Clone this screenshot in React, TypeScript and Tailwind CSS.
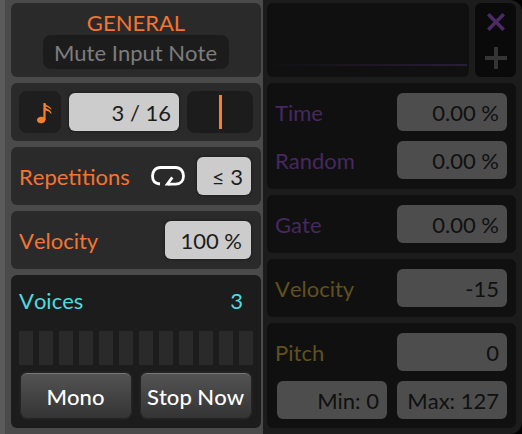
import type { ReactNode } from 'react'
import clsx from 'clsx'

function Card({ className, children }: { className?: string; children?: ReactNode }) {
  return <div className={clsx('rounded-md', className)}>{children}</div>
}

function Label({ className, children }: { className?: string; children: ReactNode }) {
  return <span className={clsx('h-[38px] pt-px leading-[38px]', className)}>{children}</span>
}

// Light numeric field of the active panel
function Field({ className, children }: { className?: string; children: ReactNode }) {
  return (
    <div
      className={clsx(
        'h-[38px] rounded-md bg-[#cccccc] pt-px text-right leading-[38px] text-[#1c1c1c] shadow-[0_0_2px_1px_#202020]',
        className,
      )}
    >
      {children}
    </div>
  )
}

// Same field in the disabled panel
function DimField({ children }: { children: ReactNode }) {
  return (
    <div className="h-[38px] w-[110px] rounded-md bg-[#4d4d4d] pr-2 pt-px text-right leading-[38px] text-[#101010]">
      {children}
    </div>
  )
}

function DimRow({ label, value, color }: { label: string; value: string; color: string }) {
  return (
    <div className="flex justify-between">
      <Label className={color}>{label}</Label>
      <DimField>{value}</DimField>
    </div>
  )
}

function PushButton({ children }: { children: ReactNode }) {
  return (
    <button className="h-[45px] w-[110px] rounded-md border-t border-[#777777] bg-linear-to-b from-[#535353] to-[#343434] pr-px font-medium text-white shadow-[0_0_1px_2px_#232323]">
      {children}
    </button>
  )
}

function NoteIcon() {
  return (
    <svg width="15" height="21" viewBox="0 0 15 21" fill="none">
      <ellipse cx="4.2" cy="17" rx="4.2" ry="3.2" transform="rotate(-12 4.2 17)" fill="#f5812a" />
      <path d="M7.5 17V0" stroke="#f5812a" strokeWidth="2.2" />
      <path d="M7.5 0C9 2.6 14 3.4 14.5 6.6L13.6 6.2C12 4.4 10 3.8 7.5 3.4Z" fill="#f5812a" />
      <path d="M7.5 3.6C9.5 6.6 14.2 6.2 14.6 11L13.4 10.2C12.4 8.4 10.4 7.6 7.5 7.2Z" fill="#f5812a" />
    </svg>
  )
}

function LoopIcon() {
  return (
    <svg width="34" height="20" viewBox="0 0 34 20" fill="none">
      <path
        d="M9 18C4.4 17.6 1.5 14.6 1.5 10S4.4 1.5 9.5 1.5H24.5C29.6 1.5 32.5 5.4 32.5 10S29.6 18.2 24.5 18.2H17"
        stroke="#ffffff"
        strokeWidth="2.8"
      />
      <path d="M13.6 19.6L20.2 10.6L22.4 12.2L18.6 17.6V19.6Z" fill="#ffffff" />
    </svg>
  )
}

function GeneralPanel() {
  return (
    <section className="flex w-[263px] shrink-0 flex-col gap-1.5 border-l-[5px] border-l-[#5b5b5b] bg-[#4a4a4a] pl-1.5 pr-0.5 pt-[3px]">
      <Card className="flex h-[74px] flex-col items-center bg-[#2a2a2a] pt-[7px]">
        <h1 className="h-[25px] leading-[25px] text-[#f47432]">GENERAL</h1>
        <div className="h-[34px] w-[186px] rounded-lg bg-[#1c1c1c] pr-px pt-px text-center leading-[34px] text-[#7d7d7d]">
          Mute Input Note
        </div>
      </Card>

      <Card className="flex h-[58px] items-center gap-2 bg-[#2a2a2a] px-2">
        <div className="flex h-[42px] w-[42px] items-center justify-center rounded-lg bg-[#1e1e1e] pl-2 pt-0.5">
          <NoteIcon />
        </div>
        <Field className="w-[110px] pr-2">3 / 16</Field>
        <div className="flex h-[42px] w-[66px] items-center justify-center rounded-lg bg-[#1c1c1c] pl-px">
          <div className="h-[34px] w-[3px] bg-[#f5812a]" />
        </div>
      </Card>

      <Card className="flex h-[58px] items-center bg-[#2a2a2a] pl-2 pr-2.5">
        <Label className="grow text-[#f47432]">Repetitions</Label>
        <div className="mr-3">
          <LoopIcon />
        </div>
        <Field className="w-[54px] pr-2">≤ 3</Field>
      </Card>

      <Card className="flex h-[58px] items-center justify-between bg-[#2a2a2a] pl-2 pr-2.5">
        <Label className="text-[#f47432]">Velocity</Label>
        <Field className="w-[86px] pr-[9px]">100 %</Field>
      </Card>

      <Card className="h-[153px] bg-[#1c1c1c] px-2 pt-1.5">
        <div className="flex h-[50px] justify-between pr-2.5 text-[#4cdce0]">
          <Label>Voices</Label>
          <Label>3</Label>
        </div>
        <div className="flex h-[34px] gap-1.5">
          {Array.from({ length: 12 }, (_, i) => (
            <div key={i} className="w-3.5 bg-[#2a2a2a]" />
          ))}
        </div>
        <div className="mt-2 flex gap-2.5 pl-0.5">
          <PushButton>Mono</PushButton>
          <PushButton>Stop Now</PushButton>
        </div>
      </Card>
    </section>
  )
}

function EchoPanel() {
  return (
    <section className="flex grow flex-col gap-1.5 rounded-r-xl bg-[#1c1c1c] pl-1 pr-1.5 pt-[3px]">
      <div className="flex h-[74px] gap-1.5">
        <Card className="flex grow items-end bg-[#101010] pb-[11px] pr-0.5">
          <div className="h-0.5 w-full bg-linear-to-r from-transparent to-[#2a1d38]" />
        </Card>
        <Card className="flex w-[41px] flex-col items-center bg-[#0a0a0a] pt-2.5">
          <svg width="18" height="18" viewBox="0 0 18 18" stroke="#4b2a66" strokeWidth="3.6">
            <path d="M1.3 1.3L16.7 16.7M16.7 1.3L1.3 16.7" />
          </svg>
          <svg className="mt-4" width="22" height="22" viewBox="0 0 22 22" stroke="#343434" strokeWidth="4">
            <path d="M0 11H22M11 0V22" />
          </svg>
        </Card>
      </div>

      <Card className="flex h-[106px] flex-col gap-2.5 bg-[#101010] pl-2 pr-[9px] pt-2.5">
        <DimRow label="Time" value="0.00 %" color="text-[#472861]" />
        <DimRow label="Random" value="0.00 %" color="text-[#472861]" />
      </Card>

      <Card className="h-[58px] bg-[#101010] pl-2 pr-[9px] pt-2.5">
        <DimRow label="Gate" value="0.00 %" color="text-[#472861]" />
      </Card>

      <Card className="h-[58px] bg-[#101010] pl-2 pr-[9px] pt-2.5">
        <DimRow label="Velocity" value="-15" color="text-[#61501f]" />
      </Card>

      <Card className="flex h-[105px] flex-col gap-2.5 bg-[#101010] pl-2 pr-[9px] pt-2.5">
        <DimRow label="Pitch" value="0" color="text-[#61501f]" />
        <div className="flex justify-end gap-2.5">
          <DimField>Min: 0</DimField>
          <DimField>Max: 127</DimField>
        </div>
      </Card>
    </section>
  )
}

export default function App() {
  return (
    <main className="flex h-[434px] w-[522px] overflow-hidden whitespace-nowrap bg-black font-[Lato,sans-serif] text-[22px] [font-kerning:none]">
      <GeneralPanel />
      <EchoPanel />
    </main>
  )
}
